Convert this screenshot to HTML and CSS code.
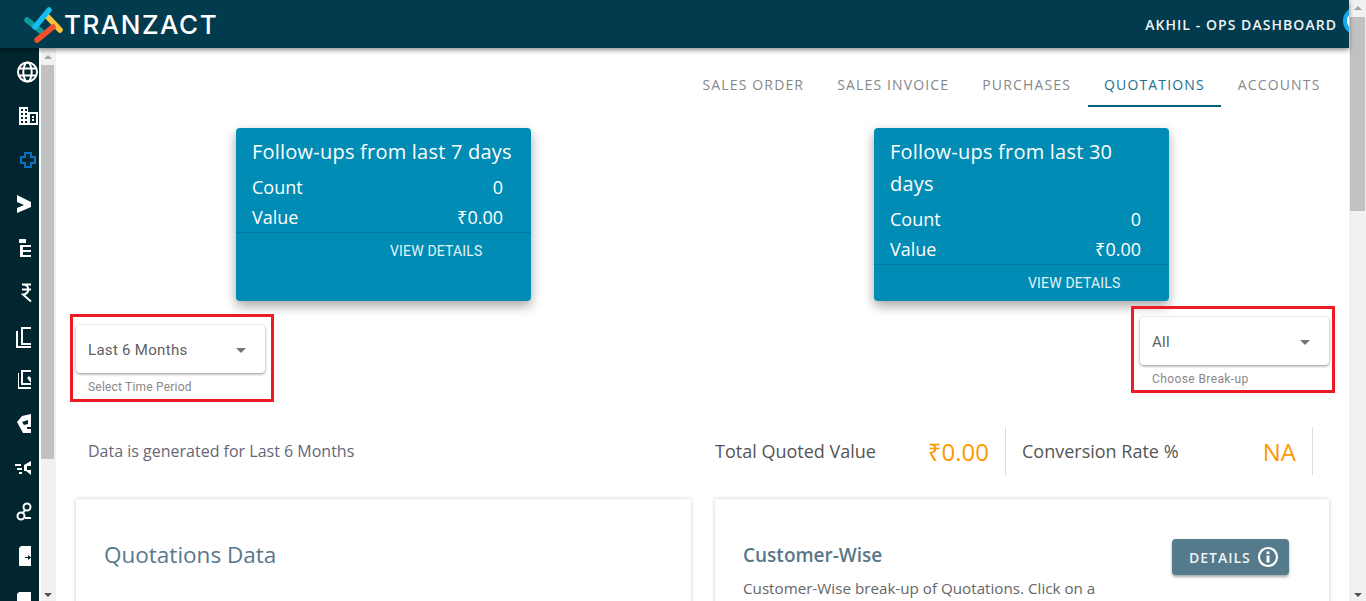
FILE: index.html
```html
<!DOCTYPE html>
<html lang="en">
  <head>
    <meta charset="UTF-8">
    <title>Tranzact - Quotations</title>
    <link rel="stylesheet" href="styles.css">
  </head>
  <body>
    <div class="app">
      <div class="window">
        <header class="topbar">
          <div class="brand">
            <svg class="brandMark" width="44" height="40" viewBox="0 0 44 40">
              <line x1="5" y1="16" x2="20" y2="28" stroke="#0f9aa0" stroke-width="5.500" stroke-linecap="round"/>
              <line x1="24" y1="11" x2="38" y2="26" stroke="#fcc23c" stroke-width="5.500" stroke-linecap="round"/>
              <line x1="13" y1="23" x2="27" y2="6" stroke="#16bdf0" stroke-width="5.500" stroke-linecap="round"/>
              <line x1="15" y1="36" x2="31" y2="23" stroke="#f2502c" stroke-width="5.500" stroke-linecap="round"/>
            </svg>
            <span class="brandName">TRANZACT</span>
          </div>
          <div class="user">
            <span>AKHIL - OPS DASHBOARD</span>
            <span class="avatar"></span>
          </div>
        </header>

        <div class="body">
          <nav class="rail">
            <svg class="railIcon" viewBox="-1 0 23 44"><g fill="none" stroke="#fff" stroke-width="2"><circle cx="11.500" cy="22" r="9.500"/><ellipse cx="11.500" cy="22" rx="4.200" ry="9.500"/><path d="M3 18.500h17M3 25.500h17"/></g></svg>
            <svg class="railIcon" viewBox="-1 0 23 44"><path fill="#fff" fill-rule="evenodd" d="M3 13h9v5h10v13H3v-1zM5 15v2h2v-2zm4 0v2h2v-2zM5 19v2h2v-2zm4 0v2h2v-2zM5 23v2h2v-2zm4 0v2h2v-2zM5 27v2h2v-2zm4 0v2h2v-2zM14 20v9h6v-9zm2 2h2v2h-2zm0 3h2v2h-2z"/></svg>
            <svg class="railIcon" viewBox="-1 0 23 44"><path fill="none" stroke="#0a6fc2" stroke-width="2" d="M9 15h6v4h4v6h-4v4H9v-4H5v-6h4z"/></svg>
            <svg class="railIcon" viewBox="-1 0 23 44"><path fill="#fff" d="M1 13l14 7v5L1 31v-5l7-3-7-3z"/></svg>
            <svg class="railIcon" viewBox="-1 0 23 44"><path fill="#fff" d="M3 13h7v4H3zM4 19h11v2H7v3h8v2H7v3h8v2H4z"/></svg>
            <svg class="railIcon" viewBox="-1 0 23 44"><path fill="none" stroke="#fff" stroke-width="2" d="M6 14.500h9M6 19.500h9M7 14.500c7 0 7 9 0 10l8 7"/></svg>
            <svg class="railIcon" viewBox="-1 0 23 44"><path fill="none" stroke="#fff" stroke-width="2" d="M15 14H6v16h9M1 17v16h14"/></svg>
            <svg class="railIcon" viewBox="-1 0 23 44"><path fill="#fff" fill-rule="evenodd" d="M5 12h10v15H5zm2 2v11h8l-4-5 2-2 2 2v-6zM2 15h1v14h12v2H2z"/></svg>
            <svg class="railIcon" viewBox="-1 0 23 44"><path fill="#fff" d="M1 20l5-6 9-2v19H7z"/><path fill="#012630" d="M6 20l6-2v4l-4 1zM11 25h4v2h-4z"/></svg>
            <svg class="railIcon" viewBox="-1 0 23 44"><path fill="#fff" fill-rule="evenodd" d="M15 15v14l-5-4H8v-6zM-1 18h6v2H-1zM1 22h5v2H1zM3 26h3v2H3z"/><path fill="#012630" d="M11 20h4v4h-4z"/></svg>
            <svg class="railIcon" viewBox="-1 0 23 44"><g fill="none" stroke="#fff" stroke-width="2"><circle cx="5" cy="26" r="3.500"/><circle cx="11" cy="17" r="3.500"/><path d="M7 23l2-3M9 28h6"/></g></svg>
            <svg class="railIcon" viewBox="-1 0 23 44"><path fill="#fff" d="M5 12h10v20H4a1 1 0 0 1-1-1V14z"/><path fill="#012630" d="M9 23h6v1H9zM12 21l3 2.500-3 2.500z"/></svg>
            <svg class="railIcon" viewBox="-1 0 23 44"><path fill="#fff" d="M3 14h12v30H1V16z"/></svg>
          </nav>

          <div class="innerScroll">
            <span class="arrowUp"></span>
            <span class="innerThumb"></span>
            <span class="arrowDown"></span>
          </div>

          <main class="content">
            <div class="tabs">
              <span class="tab">SALES ORDER</span>
              <span class="tab">SALES INVOICE</span>
              <span class="tab">PURCHASES</span>
              <span class="tab active">QUOTATIONS</span>
              <span class="tab">ACCOUNTS</span>
            </div>

            <div class="columns">
              <div class="col">
                <div class="statCard">
                  <div class="statInner">
                    <h3>Follow-ups from last 7 days</h3>
                    <div class="statRow"><span>Count</span><span>0</span></div>
                    <div class="statRow"><span>Value</span><span>₹0.00</span></div>
                  </div>
                  <div class="statLink">VIEW DETAILS</div>
                </div>
                <div class="filter filterLeft">
                  <div class="select"><span>Last 6 Months</span><i class="caret"></i></div>
                  <div class="hint">Select Time Period</div>
                </div>
              </div>
              <div class="col">
                <div class="statCard">
                  <div class="statInner">
                    <h3>Follow-ups from last 30 days</h3>
                    <div class="statRow"><span>Count</span><span>0</span></div>
                    <div class="statRow"><span>Value</span><span>₹0.00</span></div>
                  </div>
                  <div class="statLink">VIEW DETAILS</div>
                </div>
                <div class="filter filterRight">
                  <div class="select"><span>All</span><i class="caret"></i></div>
                  <div class="hint">Choose Break-up</div>
                </div>
              </div>
            </div>

            <div class="columns summary">
              <div class="generated">Data is generated for Last 6 Months</div>
              <div class="totals">
                <div class="total first"><span>Total Quoted Value</span><b>₹0.00</b></div>
                <div class="total second"><span>Conversion Rate %</span><b>NA</b></div>
              </div>
            </div>

            <div class="columns panels">
              <section class="panel">
                <h2>Quotations Data</h2>
              </section>
              <section class="panel customer">
                <div class="panelHead">
                  <h4>Customer-Wise</h4>
                  <button class="detailsBtn" type="button">DETAILS
                    <svg width="22" height="22" viewBox="0 0 22 22"><circle cx="11" cy="11" r="9" fill="none" stroke="#fff" stroke-width="2.200"/><path fill="#fff" d="M9.500 5.500h3v2.500h-3zM9.500 9.500h3v7h-3z"/></svg>
                  </button>
                </div>
                <p>Customer-Wise break-up of Quotations. Click on a</p>
              </section>
            </div>
          </main>
        </div>
      </div>

      <div class="outerScroll">
        <span class="arrowUp"></span>
        <span class="outerThumb"></span>
        <span class="arrowDown"></span>
      </div>
    </div>
  </body>
</html>
```

FILE: styles.css
```css
* {
    box-sizing: border-box;
}
html, body {
    margin: 0;
    height: 100%;
    overflow: hidden;
}
body {
    font-family: "Open Sans", "Noto Sans", Arial, sans-serif;
    font-size: 16px;
    color: #546e7a;
    background: #fff;
}
.app {
    display: flex;
    height: 601px;
}
.window {
    flex: 1;
    min-width: 0;
    display: flex;
    flex-direction: column;
}

/* top bar */
.topbar {
    flex: none;
    height: 48px;
    background: #023b4e;
    display: flex;
    align-items: center;
    justify-content: space-between;
    box-shadow: 0 2px 5px rgba(0, 0, 0, 0.45);
    position: relative;
    z-index: 2;
    overflow: hidden;
}
.brand {
    display: flex;
    align-items: center;
    padding-left: 22px;
}
.brandMark {
    flex: none;
}
.brandName {
    font-family: Inter, sans-serif;
    font-size: 26px;
    font-weight: 500;
    letter-spacing: 1.5px;
    color: #fff;
    margin-left: -2px;
}
.user {
    display: flex;
    align-items: center;
    font-size: 14px;
    font-weight: 600;
    letter-spacing: 1.05px;
    color: #eef3f5;
}
.avatar {
    width: 28px;
    height: 28px;
    border-radius: 50%;
    border: 4px solid #14a9ea;
    background: #fff;
    margin: -6px -22px 0 6px;
}

/* body */
.body {
    flex: 1;
    min-height: 0;
    display: flex;
}
.rail {
    flex: none;
    width: 39px;
    background: #012630;
    overflow: hidden;
    display: flex;
    flex-direction: column;
    align-items: flex-start;
    padding: 2px 0 0 15px;
}
.railIcon {
    flex: none;
    width: 23px;
    height: 44px;
}
.innerScroll {
    flex: none;
    width: 15px;
    margin-left: 2px;
    padding: 7px 2px 4px 0;
    background: #f1f1f1;
    display: flex;
    flex-direction: column;
    align-items: center;
}
.innerThumb {
    flex: none;
    width: 13px;
    height: 394px;
    background: #c1c1c1;
    margin-top: 6px;
}
.content {
    flex: 1;
    min-width: 0;
    padding: 0 20px;
    overflow: hidden;
}

/* scrollbars */
.outerScroll {
    flex: none;
    width: 17px;
    background: #f1f1f1;
    display: flex;
    flex-direction: column;
    align-items: center;
    padding: 6px 0 4px;
}
.outerThumb {
    flex: none;
    width: 15px;
    height: 194px;
    background: #c1c1c1;
    margin-top: 7px;
}
.arrowUp, .arrowDown {
    width: 0;
    height: 0;
    border-left: 4px solid transparent;
    border-right: 4px solid transparent;
}
.arrowUp {
    border-bottom: 4px solid #a3a3a3;
}
.arrowDown {
    border-top: 4px solid #505050;
    margin-top: auto;
}

/* tabs */
.tabs {
    display: flex;
    justify-content: flex-end;
    padding-top: 13px;
    height: 59px;
    margin-right: -8px;
}
.tab {
    font-size: 14px;
    letter-spacing: 1.150px;
    color: #85898b;
    padding: 14px 16.500px 0;
    line-height: 20px;
    border-bottom: 2px solid transparent;
}
.tab.active {
    color: #23708b;
    border-bottom-color: #045f7a;
}

.columns {
    display: grid;
    grid-template-columns: 615px 614px;
    column-gap: 24px;
}
.col {
    display: flex;
    flex-direction: column;
}

/* stat cards */
.statCard {
    width: 295px;
    height: 173px;
    margin: 21px 0 0 160px;
    background: #008cb4;
    border-radius: 4px;
    color: #fff;
    box-shadow: 0 5px 12px rgba(0, 0, 0, 0.35);
}
.col + .col .statCard {
    margin-left: 159px;
}
.statInner {
    padding: 8px 16px 0;
    border-bottom: 1px solid #0279a0;
}
.statCard h3 {
    margin: 0 0 4px;
    font-size: 20px;
    font-weight: 500;
    line-height: 32px;
    letter-spacing: 0.22px;
}
.statRow {
    display: flex;
    justify-content: space-between;
    padding-right: 12px;
    font-size: 18px;
    line-height: 30px;
}
.statLink {
    font-family: Roboto, sans-serif;
    font-size: 14px;
    letter-spacing: 0.17px;
    color: #e3f3f8;
    line-height: 37px;
    padding-left: 154px;
}

/* filter boxes */
.filter {
    width: 204px;
    border: 3px solid #ed1c24;
    padding: 8px 3px 0;
}
.filterLeft {
    height: 88px;
    margin: 13px 0 0 -6px;
}
.filterRight {
    height: 87px;
    margin: 5px -6px 0 auto;
    padding-left: 6px;
}
.select {
    width: 189px;
    height: 48px;
    display: flex;
    align-items: center;
    justify-content: space-between;
    padding: 2px 19px 0 12px;
    border-radius: 4px;
    background: #fff;
    font-family: Roboto, sans-serif;
    font-size: 15px;
    color: #5f5f5f;
    letter-spacing: 0.3px;
    box-shadow: 0 1px 3px rgba(0, 0, 0, 0.45);
}
.caret {
    width: 0;
    height: 0;
    border-left: 5px solid transparent;
    border-right: 5px solid transparent;
    border-top: 5px solid #757575;
}
.hint {
    font-family: Roboto, sans-serif;
    font-size: 12px;
    letter-spacing: 0.2px;
    color: #888;
    padding: 7px 0 0 12px;
}
.filterRight .hint {
    letter-spacing: 0.4px;
}

/* summary */
.summary {
    height: 48px;
    margin-top: 25px;
    align-items: center;
    font-size: 16px;
    color: #555;
}
.generated {
    padding-left: 12px;
    color: #667;
}
.totals {
    display: flex;
    height: 48px;
}
.total {
    display: flex;
    align-items: center;
    justify-content: space-between;
    border-right: 1px solid #ddd;
    font-size: 18px;
}
.total span {
    margin-top: -1px;
}
.total.first {
    width: 291px;
    padding-right: 16px;
}
.total.second {
    width: 307px;
    padding: 0 16px;
}
.total b {
    font-size: 24px;
    font-weight: 400;
    color: #ff9800;
}

/* panels */
.panels {
    margin-top: 24px;
}
.panel {
    height: 200px;
    border-radius: 2px;
    background: #fff;
    box-shadow: 0 0 4px rgba(0, 0, 0, 0.2);
}
.panel h2 {
    margin: 0;
    padding: 38px 0 0 28px;
    font-size: 22.500px;
    font-weight: 400;
    line-height: 36px;
    color: #58788a;
}
.customer {
    padding: 40px 40px 0 28px;
}
.panelHead {
    display: flex;
    justify-content: space-between;
    align-items: flex-start;
}
.panelHead h4 {
    margin: 0;
    padding-top: 3px;
    font-size: 19px;
    font-weight: 600;
    line-height: 26px;
    color: #58788a;
}
.detailsBtn {
    display: flex;
    align-items: center;
    gap: 6px;
    width: 117px;
    height: 36px;
    padding: 0 0 0 17px;
    border: 0;
    border-radius: 4px;
    background: #557a8b;
    color: #eef3f5;
    font-family: inherit;
    font-size: 14px;
    font-weight: 600;
    letter-spacing: 1px;
    box-shadow: 0 2px 3px rgba(0, 0, 0, 0.35);
}
.customer p {
    margin: 0;
    padding-top: 1px;
    font-size: 15.200px;
    line-height: 24px;
    color: #666;
}
```
